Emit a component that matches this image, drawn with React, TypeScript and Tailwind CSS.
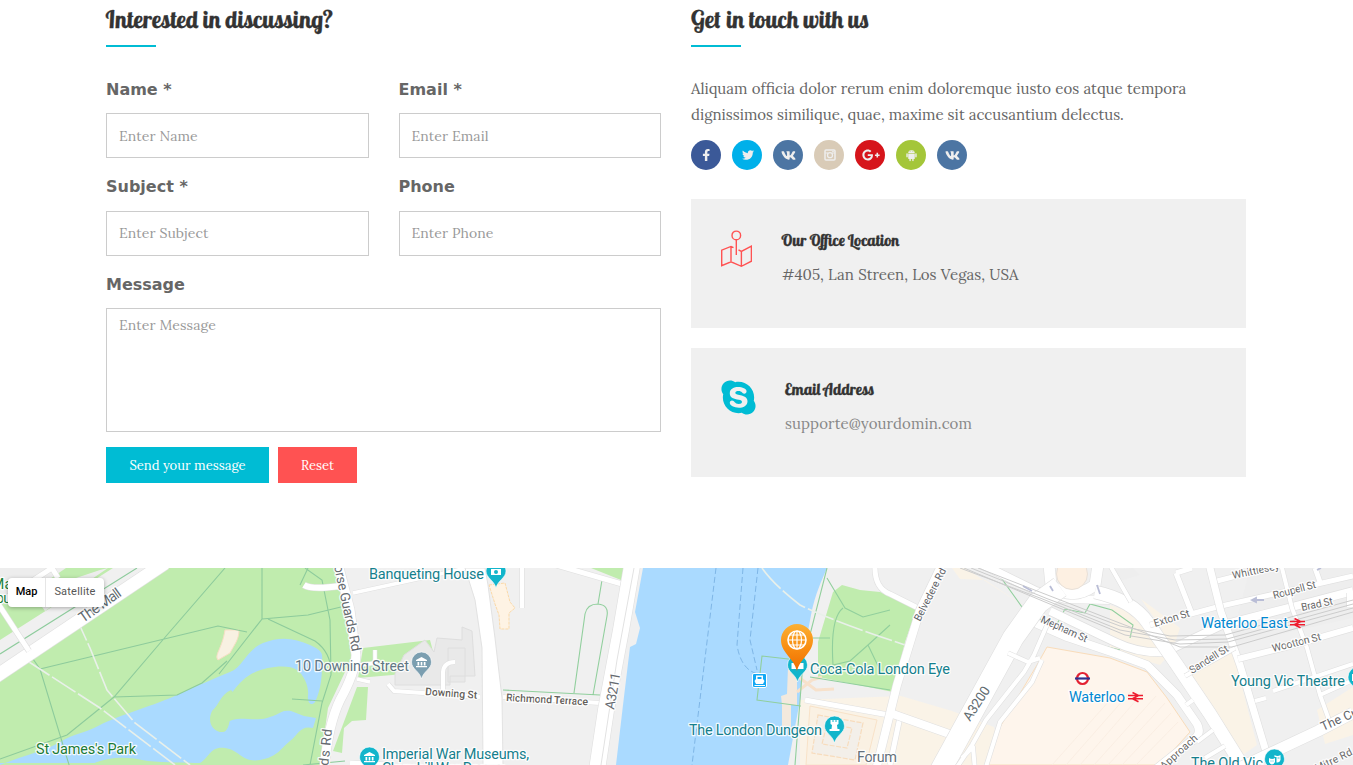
import React from "react";
import { FaFacebookF, FaTwitter, FaVk, FaGooglePlusG, FaSkype } from "react-icons/fa";
import { IoLogoAndroid } from "react-icons/io";

const serif = "font-['Lora','Liberation_Serif',serif]";
const display = "font-['Lobster','Liberation_Serif',serif] font-normal [-webkit-text-stroke:0.3px_#333] text-[#333]";

function Heading({ children }: { children: string }) {
  return (
    <div className="h-[47px]">
      <h2 className={`${display} h-[45px] origin-[0_28px] skew-x-[9deg] whitespace-nowrap pl-[1.5px] text-[24px] leading-[38px]`}>{children}</h2>
      <div className="h-[2px] w-[50px] bg-[#00bcd4]" />
    </div>
  );
}

const labelText = "h-[37px] pt-[3.5px] font-['DejaVu_Sans',sans-serif] text-[16px] font-bold leading-[20px] text-[#666]";

function Field({ label, hint }: { label: string; hint: string }) {
  return (
    <label className="flex flex-col">
      <span className={labelText}>{label}</span>
      <input
        placeholder={hint}
        className={`${serif} h-[45px] w-full border border-[#ccc] bg-white px-3 text-[14px] tracking-[0.1px] placeholder:text-[#999]`}
      />
    </label>
  );
}

function CameraIcon() {
  return (
    <svg viewBox="0 0 12 12" className="size-3" fill="none" stroke="#eee">
      <rect x="1" y="1" width="10" height="10" rx="1" strokeWidth="1.5" />
      <circle cx="6" cy="6.2" r="2.5" strokeWidth="1.3" />
      <path d="M1 4h3M8 4h3M8.2 2.5h1.6" strokeWidth="1.2" />
    </svg>
  );
}

function Social() {
  const items = [
    { bg: "bg-[#3b5998]", icon: <FaFacebookF size={12.5} /> },
    { bg: "bg-[#00b0ea]", icon: <FaTwitter size={12} /> },
    { bg: "bg-[#4c75a3]", icon: <FaVk size={15} /> },
    { bg: "bg-[#d9cbb7]", icon: <CameraIcon /> },
    { bg: "bg-[#d6151b]", icon: <FaGooglePlusG size={18} /> },
    { bg: "bg-[#a4c639]", icon: <IoLogoAndroid size={15} /> },
    { bg: "bg-[#4c75a3]", icon: <FaVk size={15} /> },
  ];
  return (
    <div className="mt-3 flex gap-[11px]">
      {items.map((it, i) => (
        <a key={i} className={`flex size-[30px] items-center justify-center rounded-full pl-px text-[#eee] ${it.bg}`}>{it.icon}</a>
      ))}
    </div>
  );
}

function MapPinIcon() {
  return (
    <svg viewBox="0 0 31 38" className="mt-px h-[38px] w-[31px]" fill="none" stroke="#ff5252" strokeWidth="1.4">
      <circle cx="15.3" cy="5.4" r="4.3" />
      <path d="M15.3 9.7V25M12.5 17.6 10 16.4.7 20.2V35.6L10 31.8 20.4 36.3 30.4 31.2V16.2L20.4 21.4 17.5 19.8M10 16.4V31.8M20.4 21.4V36.3" />
    </svg>
  );
}

type LabelProps = { x: number; y: number; w: number; s?: number; c?: string; r?: number; b?: number; children: string };
function Label({ x, y, w, s = 14.5, c = "#15808d", r = 0, b = 400, children }: LabelProps) {
  return (
    <text x={x} y={y} textLength={w} fontSize={s} fill={c} fontWeight={b} stroke="#fff" strokeWidth="2.6" strokeOpacity=".85" strokeLinejoin="round" paintOrder="stroke" transform={r ? `rotate(${r} ${x} ${y})` : undefined}>
      {children}
    </text>
  );
}

function Road({ d, w }: { d: string; w: number }) {
  return (
    <g fill="none" strokeLinejoin="round">
      <path d={d} stroke="#e0e0e0" strokeWidth={w + 1.2} />
      <path d={d} stroke="#fff" strokeWidth={w} />
    </g>
  );
}

function Rail({ x, y }: { x: number; y: number }) {
  return (
    <path d="M0 3.5H15M0 6.7H15M4.5 .5 10.5 3.5 4.5 6.7 10.5 9.8" transform={`translate(${x} ${y})`} fill="none" stroke="#ee1c2e" strokeWidth="1.6" />
  );
}

function Pin({ x, y, c = "#12b5cb", children }: { x: number; y: number; c?: string; children?: React.ReactNode }) {
  return (
    <g transform={`translate(${x} ${y})`}>
      <path d="M0 17C-2 9-10 7-10 0A10 10 0 0 1 10 0C10 7 2 9 0 17Z" fill={c} stroke="#fff" strokeWidth=".6" />
      {children}
    </g>
  );
}

const museum = "M-5.5-2 0-5 5.5-2V-1H-5.5ZM-4 0H-2.3V3.5H-4ZM-.8 0H.8V3.5H-.8ZM2.3 0H4V3.5H2.3ZM-5.5 4H5.5V5.3H-5.5Z";

function StreetMap() {
  return (
    <svg viewBox="0 568 1353 197" className="block h-[197px] w-full font-['Roboto',sans-serif]">
      <defs>
        <linearGradient id="marker" x1="0" y1="0" x2="0" y2="1">
          <stop offset="0" stopColor="#fbb034" />
          <stop offset=".5" stopColor="#f98e12" />
          <stop offset="1" stopColor="#ee6c00" />
        </linearGradient>
      </defs>
      <rect y="568" width="1353" height="197" fill="#f0f0f0" />

      <path d="M0 568H113L0 640ZM167 568H335L353 655 328 708 320 765H0V680ZM363 648 430 640 434 655 415 673 358 678ZM357 687H368L366 720 352 721 344 728 342 753 333 751ZM591 568H625L621 580ZM842 585 860 590 880 592 917 608 905 642 893 692 818 677V642L833 592Z" fill="#c0ecae" />
      <path d="M0 568 66 568 44 583 0 600ZM40 604 60 592 70 580 100 570 108 568 45 611Z" fill="#ededed" />
      <path d="M0 765C25 755 45 751 60 742S83 734 100 725 158 704 177 695 216 678 230 672 246 650 263 643 295 638 310 645 322 654 322 665 321 690 315 702C311 707 307 702 308 695S305 676 297 670 267 666 253 673 226 699 223 711L228 722C238 715 252 722 267 718S280 710 291 711L304 716 316 718 313 728C300 725 298 735 290 741S278 757 260 760 240 750 225 748 210 757 200 763H0Z" fill="#aadaff" />
      <path d="M231 690C220 695 220 704 212 711 206 724 215 732 222 732 227 733 230 724 230 716L240 700ZM90 765C110 756 127 757 142 760S180 762 195 763V765Z" fill="#c0ecae" />
      <path d="M643 568H827C822 580 815 594 811 615L803 658 800 700 788 765H616L623 705 630 647 636 644 640 628 635 612Z" fill="#aadaff" />
      <path d="M225 630H239C239 640 234 645 230 653L218 660C214 655 222 649 225 630Z" fill="#f8f1e2" stroke="#f7dfc4" />

      <path d="M901 696 952 711 994 727 1004 765H800V700ZM952 568 960 579 985 580 1030 610 965 568ZM1141 599 1180 628 1174 646ZM1110 605 1150 619 1178 644 1160 665 1110 650ZM1187 678 1233 652 1257 745 1240 757ZM1317 710 1353 687V735L1325 744Z" fill="#faf3e7" />
      <path d="M1047 647 1110 658 1147 672 1167 698 1190 732 1160 765H988L997 732 1037 665Z" fill="#fef5ec" stroke="#f9dcba" />
      <path d="M810 706 877 720 866 765H806Z" fill="#faf1e3" stroke="#f8e2c8" />
      <path d="M818 715 863 723 855 760 812 753ZM827 724 852 728 847 748 822 744Z" fill="#f3efe9" stroke="#f7dcbd" strokeWidth="1.2" strokeDasharray="5 1.5" />
      <path d="M788 667H797V705H791V727L782 726V705L781 696 787 694Z" fill="#f3e9dd" />
      <path d="M797 676 816 690 834 689M797 692 812 680 822 677" stroke="#f7e1cb" strokeWidth="3" fill="none" />
      <path d="M489 585 505 583 510 602 515 608 509 613V629H500L499 615 495 604Z" fill="#fef3e4" stroke="#fbd9a8" strokeDasharray="3 1" />
      <path d="M404 655 425 640 434 652 437 638 462 640V627L472 631 475 676H450V685H395V674ZM448 648H465V682H448Z" fill="#e9e9e9" stroke="#dedede" />
      <path d="M1111 570 1133 568 1140 575 1120 581ZM1250 568 1353 568V618L1230 645Z" fill="#eee" />

      <g fill="none" stroke="#8dcb9c" strokeWidth="1.1">
        <path d="M0 654 137 568M225 568 167 635 114 697 67 735 0 759M33 659 40 669 70 768M40 669 218 626 247 632M114 697 177 695 202 683 227 661M262 568V619L219 674M262 619 308 615 345 606M268 619 315 641Q332 653 331 675L322 703 310 765M292 699 322 701M303 765 345 761M305 568 322 580 330 620 331 675M308 568 300 585" />
        <path d="M503 690 600 695M602 580 598 604Q587 604 585 614L574 693M598 604Q609 605 607 616L593 695M827 568 803 662 795 765M827 578 845 608 863 617 890 610M843 608Q830 618 833 665L850 661 868 645 890 625M868 645 880 670M810 677 890 690M797 660 762 656 757 700 801 706M813 638H830M994 568 1022 607 1067 637 1120 650M1057 624 1065 609 1085 613 1090 604 1112 610 1133 625 1130 638M1110 651 1123 653" stroke="#91cf9d" />
      </g>
      <g fill="none" stroke="#7fb6e6" strokeWidth="1" strokeDasharray="6 3">
        <path d="M716 568 692 765M743 568 737 645Q741 670 758 674M758 568 750 640 757 670" />
      </g>
      <path d="M762 568Q774 585 800 605 830 620 905 645M75 615 90 648 107 690 135 723 190 765M26 660 100 708 175 765" fill="none" stroke="#e9f0ea" strokeWidth="1.6" strokeDasharray="28 3" />

      <Road d="M-5 677 165 563" w={13} />
      <Road d="M-3 602 29 651M0 602 52 568M52 568 58 578" w={5} />
      <Road d="M304 585Q312 590 340 586" w={6} />
      <Road d="M337 560 350 610 356 655Q355 673 340 700 328 725 324 770" w={9} />
      <Road d="M353 593 440 574 466 568M357 679 370 682M375 650V663L360 665" w={3.5} />
      <path d="M465 568H485L488 585 495 638 502 698 503 765H483L482 648 475 600Z" fill="#fff" stroke="#e2e2e2" />
      <Road d="M388 684 394 691 480 697M503 697 600 703M443 690V672Q444 662 455 662M522 565V608" w={4} />
      <Road d="M556 565 622 584M350 763 390 765" w={5} />
      <Road d="M633 560 621 630 606 710 597 770" w={16} />
      <path d="M634 568 617 660 601 765" stroke="#e2e2e2" fill="none" />

      <Road d="M875 565Q874 588 890 594L922 610M805 700 900 717 890 765" w={5} />
      <Road d="M944 560 920 610 897 685 876 770M890 713 955 736" w={8} />
      <Road d="M973 560 1036 591 1065 599 1110 600M1033 622 1067 637 1120 655 1147 665 1177 695 1197 724Q1203 735 1190 742L1155 770M1050 611 1115 642Q1140 654 1165 652L1222 625 1292 607 1353 591" w={8} />
      <Road d="M1049 565 1051 585Q1072 602 1095 585L1098 565" w={11} />
      <Road d="M1060 587 1038 603 1013 638 938 775" w={21} />
      <Road d="M1008 653 1028 662 1040 658M1047 625 1034 655 1024 672 986 720 972 745 955 770M1042 660 1032 682 1000 722 985 770M962 758 973 747 975 770" w={4} />
      <Road d="M1095 592Q1132 600 1148 623L1177 665 1210 714 1245 770" w={13} />
      <Road d="M1176 573 1192 614M1176 573 1192 568M1150 625 1217 607 1353 576M1213 582 1280 565M1320 582 1315 568" w={5} />
      <Road d="M1208 560 1221 612 1240 665 1267 755" w={7} />
      <Road d="M1280 560 1292 608 1307 648 1320 695 1329 720M1185 676 1235 648M1273 691 1353 664M1320 695 1353 680M1255 701 1266 698M1186 705 1193 700M1197 742 1213 730M1205 758 1225 746M1107 560 1131 602" w={4} />
      <Road d="M1238 659 1290 646 1353 628M1350 593V607" w={6} />
      <Road d="M1235 770 1318 731 1353 713" w={11} />

      <g fill="none" stroke="#ccc" strokeWidth="1">
        <path d="M960 568 1040 598 1120 630 1175 640 1227 639 1353 604M964 568 1045 602 1125 635 1180 644 1228 642 1353 608M971 568 1048 599 1120 626 1170 636 1225 635 1353 600M978 568 1050 596 1130 627 1180 647 1232 647 1353 612" />
      </g>
      <g stroke="#f8ebdf" strokeWidth=".7">
        <path d="M1052 765 1110 700M1066 765 1132 690M1080 765 1145 690M1094 765 1156 696M1108 765 1165 703M1122 765 1171 713M1136 765 1178 722" />
      </g>
      <circle cx="1072" cy="574" r="15.5" fill="#fdf0e2" stroke="#e8e0d8" />
      <path d="M1023 586 1032 591M1050 586 1053 591M1097 585 1100 594M1252 600H1264M1252 600 1256 598V602ZM1317 570 1321 568" fill="#b9bdd6" stroke="#b9bdd6" strokeWidth="1.8" />

      <Label x={-8} y={589} w={20} s={14} c="#188038">Ma</Label>
      <Label x={-4} y={603} w={15} s={14} c="#188038">ou</Label>
      <Label x={83} y={623} w={48} r={-35} c="#5f6b70">The Mall</Label>
      <Label x={36} y={754} w={100} c="#1d7b35">St James's Park</Label>
      <Label x={332} y={557} w={97} r={78} s={13.5} c="#666b70">Horse Guards Rd</Label>
      <Label x={325} y={797} w={68} r={-84} s={13.5} c="#666b70">Guards Rd</Label>
      <Label x={369} y={579} w={115}>Banqueting House</Label>
      <Label x={295} y={671} w={114} c="#5f7684">10 Downing Street</Label>
      <Label x={425} y={695} w={52} s={10.5} r={4} b={500} c="#625d58">Downing St</Label>
      <Label x={506} y={701} w={82} s={10.5} r={3} b={500} c="#625d58">Richmond Terrace</Label>
      <Label x={614} y={710} w={37} r={-80} s={13.5} c="#666b70">A3211</Label>
      <Label x={382} y={759} w={147}>Imperial War Museums,</Label>
      <Label x={382} y={773} w={124}>Churchill War Rooms</Label>
      <Label x={810} y={674} w={140}>Coca-Cola London Eye</Label>
      <Label x={689} y={735} w={133}>The London Dungeon</Label>
      <Label x={857} y={762} w={40} c="#65717b">Forum</Label>
      <Label x={920} y={622} w={58} s={10.5} r={-63} c="#5f6368">Belvedere Rd</Label>
      <Label x={970} y={722} w={38} r={-57} s={13.5} c="#5f6b70">A3200</Label>
      <Label x={1040} y={622} w={50} s={10.5} r={24} c="#5f6368">Mepham St</Label>
      <Label x={1069} y={702} w={56} c="#0288d1">Waterloo</Label>
      <Label x={1201} y={628} w={87} c="#0288d1">Waterloo East</Label>
      <Label x={1231} y={686} w={114}>Young Vic Theatre</Label>
      <Label x={1191} y={768} w={72}>The Old Vic</Label>
      <Label x={1155} y={627} w={37} s={10.5} r={-17} c="#686868">Exton St</Label>
      <Label x={1233} y={579} w={48} s={10.5} r={-12} c="#686868">Whittlesey</Label>
      <Label x={1274} y={599} w={44} s={10.5} r={-15} c="#686868">Roupell St</Label>
      <Label x={1302} y={611} w={32} s={10.5} r={-12} c="#686868">Brad St</Label>
      <Label x={1273} y={652} w={50} s={10.5} r={-14} c="#686868">Wootton St</Label>
      <Label x={1192} y={674} w={44} s={10.5} r={-32} c="#686868">Sandell St</Label>
      <Label x={1323} y={731} w={44} s={12.5} r={-24} c="#5f6368">The Cut</Label>
      <Label x={1164} y={770} w={46} s={10.5} r={-42} c="#686868">Approach</Label>
      <Label x={1317} y={772} w={40} s={10.5} r={-26} c="#686868">Mitre Rd</Label>

      <Pin x={496} y={571}><path d="M-5-2H5V4H-5Z" fill="#fff" /><circle cy="1" r="2" fill="#12b5cb" /></Pin>
      <Pin x={421.5} y={662} c="#7b9eb0"><path d={museum} fill="#fff" /></Pin>
      <Pin x={369.5} y={757}><path d={museum} fill="#fff" /></Pin>
      <Pin x={834.5} y={726}><path d="M-4-6V-2L-2.500-1-3 3H-5V5H5V3H3L2.500-1 4-2V-6H2V-4H1V-6H-1V-4H-2V-6Z" fill="#fff" /></Pin>
      <Pin x={797.5} y={665}><rect x="-6" y="-2" width="12" height="6" fill="#fff" /></Pin>
      <Pin x={1358} y={677}><path d="M-6-3H0V4H-6Z" fill="#fff" /></Pin>
      <Pin x={1274.5} y={759}>
        <path d="M-5.500-1Q-2.500 1 .5-1V3Q-2.500 8-5.500 3ZM0-4Q3-2 6-4V1Q5 4 2 3.500V-2H0Z" fill="#fff" />
        <path d="M-4 2H-3M-2 2H-1M3-1H5" stroke="#12b5cb" strokeWidth=".8" />
      </Pin>
      <Rail x={1290} y={618} />
      <Rail x={1128} y={692} />
      <circle cx="1082.5" cy="678.5" r="5.5" fill="#fff" stroke="#e32232" strokeWidth="2.2" />
      <path d="M1075 678.5H1090" stroke="#30318f" strokeWidth="2.2" />
      <rect x="752.5" y="673.5" width="14" height="14" rx="1.5" fill="#12a8f4" stroke="#fff" />
      <path d="M756 675.5H763V679L764.5 681 763 684H756L754.5 681 756 679ZM754.5 685H765V686H754.5ZM757.5 677H761.5V679H757.5Z" fill="#fff" fillRule="evenodd" />
      <path d="M797 671C794 658 781 653 781 640A16 16 0 0 1 813 640C813 653 800 658 797 671Z" fill="url(#marker)" />
      <g fill="none" stroke="#fff" strokeWidth="1.2">
        <circle cx="797" cy="640" r="9" strokeWidth="1.6" />
        <ellipse cx="797" cy="640" rx="4.5" ry="9" />
        <path d="M797 631V649M788 640H806M790 635H804M790 645H804" />
      </g>
    </svg>
  );
}

export default function App() {
  return (
    <main className="h-[765px] overflow-hidden bg-white">
      <div className="ml-[106px] flex h-[568px] w-[1140px] gap-[30px]">
        <section className="w-[555px]">
          <Heading>Interested in discussing?</Heading>
          <form className="mt-[29px]">
            <div className="grid grid-cols-2 gap-x-[30px] gap-y-[15.5px]">
              <Field label="Name *" hint="Enter Name" />
              <Field label="Email *" hint="Enter Email" />
              <Field label="Subject *" hint="Enter Subject" />
              <Field label="Phone" hint="Enter Phone" />
            </div>
            <label className="mt-[15.5px] flex flex-col">
              <span className={labelText}>Message</span>
              <textarea placeholder="Enter Message" className={`${serif} h-[124px] w-full resize-none border border-[#ccc] px-3 py-[6px] text-[14px] leading-[20px] tracking-[0.1px] placeholder:text-[#999]`} />
            </label>
            <div className={`${serif} mt-[15px] flex gap-[9px] text-[13px] text-white`}>
              <button type="button" className="h-9 w-[163px] bg-[#00bcd4] pt-[2px]">Send your message</button>
              <button type="button" className="h-9 w-[79px] bg-[#ff5252] pt-[2px]">Reset</button>
            </div>
          </form>
        </section>
        <section className="w-[555px]">
          <Heading>Get in touch with us</Heading>
          <p className={`${serif} mt-[29px] whitespace-nowrap text-[15px] leading-[26px] text-[#666]`}>
            <span className="[word-spacing:0.4px]">Aliquam officia dolor rerum enim doloremque iusto eos atque tempora</span><br />
            dignissimos similique, quae, maxime sit accusantium delectus.
          </p>
          <Social />
          <div className="mt-[29px] flex h-[129px] gap-[30px] bg-[#f0f0f0] pl-[30px] pt-[30px]">
            <MapPinIcon />
            <div>
              <h3 className={`${display} origin-[0_17px] skew-x-[9deg] whitespace-nowrap pl-[0.5px] text-[16px] leading-[23px]`}>Our Office Location</h3>
              <p className={`${serif} mt-[10px] text-[15px] leading-[26px] text-[#666] [word-spacing:0.3px]`}>#405, Lan Streen, Los Vegas, USA</p>
            </div>
          </div>
          <div className="mt-5 flex h-[129px] gap-[29px] bg-[#f0f0f0] pl-[30px] pt-[30px]">
            <FaSkype className="-mx-[2px] size-[39px] shrink-0 text-[#00bcd4]" />
            <div>
              <h3 className={`${display} origin-[0_17px] skew-x-[9deg] whitespace-nowrap pl-[0.5px] text-[16px] leading-[23px] [word-spacing:-1px]`}>Email Address</h3>
              <p className={`${serif} mt-[10px] text-[15px] leading-[26px] tracking-[0.08px] text-[#888]`}>supporte@yourdomin.com</p>
            </div>
          </div>
        </section>
      </div>
      <div className="relative">
        <StreetMap />
        <div className="absolute left-2 top-[10px] flex h-[29px] items-center rounded-sm bg-white font-['Roboto',sans-serif] text-[11px] shadow-[0_1px_4px_rgba(0,0,0,0.3)]">
          <button type="button" className="h-full w-[38px] border-r border-[#e6e6e6] font-medium text-black">Map</button>
          <button type="button" className="h-full w-[58px] tracking-[0.2px] text-[#565656]">Satellite</button>
        </div>
      </div>
    </main>
  );
}
